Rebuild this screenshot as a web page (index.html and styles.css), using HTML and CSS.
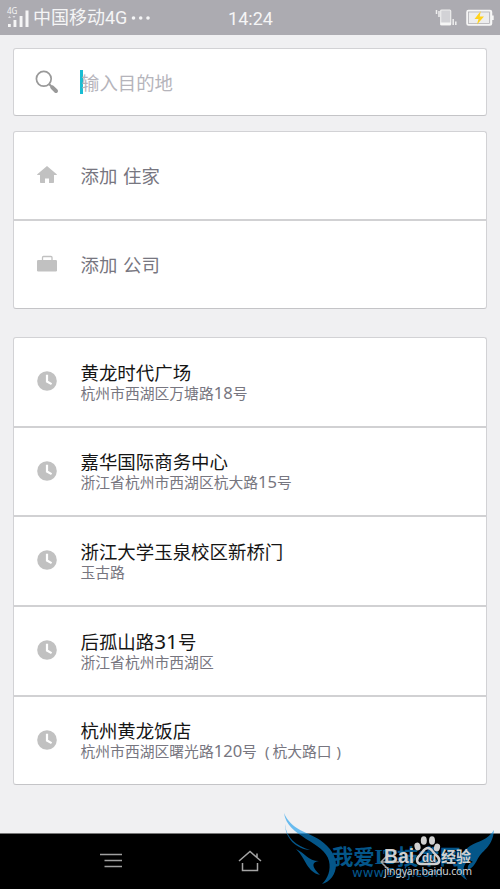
FILE: index.html
```html
<!DOCTYPE html>
<html lang="zh-CN">
<head>
<meta charset="utf-8">
<meta name="viewport" content="width=device-width">
<title>输入目的地</title>
<link rel="stylesheet" href="styles.css">
</head>
<body>
<svg class="defs" width="0" height="0"><defs>
<symbol id="clock" viewBox="0 0 20 20"><circle cx="10" cy="10" r="9.8" fill="#c1c1c1"/><path d="M10 3.800v6.700l4.600 2.600" fill="none" stroke="#fff" stroke-width="2.200"/></symbol>
</defs></svg>
<header class="status">
  <div class="carrier">
    <svg class="signal" width="22" height="22" viewBox="0 0 22 22"><path d="M1 17h2.800v3H1zM6.500 13h2.900v7H6.500zM12.600 9h2.900v11h-2.900zM18.500 3.500h3v16.500h-3z" fill="#f5f5f6"/><path d="M1 11l1.500-2L4 11zM5.500 9h3L7 11z" fill="#dedee2"/><text x="0" y="7.300" class="net">4G</text></svg>
    <span>中国移动4G</span><svg width="20" height="6" viewBox="0 0 20 6" fill="#f5f5f6"><circle cx="2.500" cy="3" r="1.800"/><circle cx="9.700" cy="3" r="1.800"/><circle cx="17" cy="3" r="1.800"/></svg>
  </div>
  <time class="time">14:24</time>
  <div class="indicators">
    <svg width="22" height="18" viewBox="0 0 22 18"><path d="M1.500 1v4M4 2v6M18.200 10v6M20.800 12.500v3.500" stroke="#eee" stroke-width="1.500"/><rect x="5.700" y="1" width="10" height="15" rx="1" fill="#d2d2d6" stroke="#eee" stroke-width="1.200"/><path d="M5.500 13.500h10.500V16H5.500z" fill="#f6f6f6"/></svg>
    <svg width="28" height="18" viewBox="0 0 28 18"><rect x="1" y="1.500" width="24.500" height="14.500" rx="1.500" fill="#eee" stroke="#f7f7f7" stroke-width="1.500"/><rect x="2.500" y="3" width="21" height="11.500" fill="#ededee" stroke="#aaa9ae" stroke-width=".7"/><path d="M26 6.500h1.700v4.500H26z" fill="#f7f7f7"/><path d="M14.800 2L8.500 10h4l-1.500 5.500 7-8h-4.300z" fill="#ffd21c"/></svg>
  </div>
</header>
<main>
  <section class="card search">
    <svg class="icon lens" width="24" height="24" viewBox="0 0 24 24"><circle cx="8.800" cy="8.800" r="7.400" fill="none" stroke="#999" stroke-width="1.700"/><path d="M14 14l3 3" stroke="#999" stroke-width="2"/><path d="M17.300 17.300l3.700 3.700" stroke="#999" stroke-width="4" stroke-linecap="round"/></svg>
    <i class="caret"></i><span class="hint">输入目的地</span>
  </section>
  <section class="card shortcuts">
    <div class="row"><svg class="icon" width="20" height="18" viewBox="0 0 20 18"><path d="M10 0L20 8.500q-.5.700-1.500.500H17v7.200q0 .800-.8.800H12v-4.500H8V17H3.800Q3 17 3 16.200V9H1.500Q.5 9.200 0 8.500z" fill="#c1c1c1"/></svg><span>添加 住家</span></div>
    <div class="row"><svg class="icon" width="20" height="18" viewBox="0 0 20 18"><path d="M5.500 5V2.500q0-1 1-1h7.500q1 0 1 1V5" fill="none" stroke="#c1c1c1" stroke-width="1.300"/><rect y="5" width="20" height="11.500" rx="1.300" fill="#c1c1c1"/></svg><span>添加 公司</span></div>
  </section>
  <section class="card history">
    <div class="row"><svg class="icon" width="20" height="20"><use href="#clock"/></svg><div><h2>黄龙时代广场</h2><p>杭州市西湖区万塘路<span class="num">18</span>号</p></div></div>
    <div class="row"><svg class="icon" width="20" height="20"><use href="#clock"/></svg><div><h2>嘉华国际商务中心</h2><p>浙江省杭州市西湖区杭大路<span class="num">15</span>号</p></div></div>
    <div class="row"><svg class="icon" width="20" height="20"><use href="#clock"/></svg><div><h2>浙江大学玉泉校区新桥门</h2><p>玉古路</p></div></div>
    <div class="row"><svg class="icon" width="20" height="20"><use href="#clock"/></svg><div><h2>后孤山路<span class="num">31</span>号</h2><p>浙江省杭州市西湖区</p></div></div>
    <div class="row"><svg class="icon" width="20" height="20"><use href="#clock"/></svg><div><h2>杭州黄龙饭店</h2><p>杭州市西湖区曙光路<span class="num">120</span>号<span class="paren open">(</span>杭大路口<span class="paren">)</span></p></div></div>
  </section>
</main>
<nav class="navbar">
  <svg width="24" height="24" viewBox="0 0 24 24"><path d="M1 4.500h22M5.500 10.500H23M5.500 16.500H23" stroke="#a0a0a0" stroke-width="1.700"/></svg>
  <svg width="24" height="24" viewBox="0 0 24 24"><path d="M1 11L12 1.500 23 11M19 7V3.500M4.500 13v7.500h15V13" fill="none" stroke="#a5a5a5" stroke-width="1.500"/></svg>
  <svg width="24" height="24" viewBox="0 0 24 24"><path d="M12 4L4 12l8 8M4 12h18" fill="none" stroke="#a5a5a5" stroke-width="1.500"/></svg>
</nav>
<svg class="mark" width="230" height="89" viewBox="0 0 230 89">
  <g class="wings"><path d="M14 13C21 30 38 32 50 40c11 8 16 16 16 25 0 9-6 17-14 19 6-6 9-14 7-23C55 42 17 37 14 13z"/><path d="M15 24c1 13 11 22 25 26C26 49 15 38 15 24zM26 49c9 4 12 12 23 12-7 1-8 5 1 14-13-3-14-16-24-26zM224 30c-6 10-16 11-24 16-13 9-19 25-3 34-6-9-4-17 4-21 10-5 22-12 23-29zM215 50c-7 4-10 6-17 9l5 3c-4 1-6 4-5 8 9-4 8-13 17-20z"/><text x="62" y="64" class="site" textLength="129" lengthAdjust="spacingAndGlyphs">我爱IT技术网</text><text x="82" y="77" class="www" textLength="91" lengthAdjust="spacingAndGlyphs">www.52ij.com</text></g>
  <g class="baidu"><text x="114" y="63" class="bai" textLength="30" lengthAdjust="spacingAndGlyphs">Bai</text><text x="152" y="62" class="du" textLength="14" lengthAdjust="spacingAndGlyphs">du</text><text x="171" y="62" class="exp" textLength="30">经验</text><text x="114" y="75" class="url" textLength="88">jingyan.baidu.com</text>
  <ellipse cx="147.500" cy="46.500" rx="3" ry="4" transform="rotate(-15 147.500 46.500)"/><ellipse cx="153.800" cy="40.500" rx="3" ry="4.300"/><ellipse cx="162" cy="40.500" rx="3" ry="4.300"/><ellipse cx="167" cy="47.500" rx="3" ry="4" transform="rotate(15 167 47.500)"/><path d="M158 48c-4 0-5 4-8 7-5 4-3 9 1 9h14c5 0 6-5 1-9-4-3-4-7-8-7z" fill="none" stroke="#d0d0d0" stroke-width="2.500"/></g>
</svg>
</body>
</html>
```
FILE: styles.css
```css
* { box-sizing: border-box; }
body { margin: 0; width: 500px; height: 889px; overflow: hidden; position: relative; background: #f0f0f2; font-family: "Noto Sans", "Noto Sans CJK SC", sans-serif; color: #777680; display: flex; flex-direction: column; }
svg { display: block; flex: none; }
.defs { position: absolute; }
.status { height: 35px; background: #acabb1; color: #f5f5f6; display: grid; grid-template-columns: 1fr auto 1fr; align-items: center; padding: 0 6px 0 7px; font: 18px/34px Roboto, "Noto Sans CJK SC", sans-serif; }
.carrier { display: flex; align-items: center; gap: 4px; white-space: nowrap; font-size: 18px; }
.signal { overflow: visible; }
.time { padding-top: 2px; }
.net { font: 8px "Noto Sans", sans-serif; fill: #f5f5f6; }
.indicators { display: flex; gap: 9px; justify-content: flex-end; }
main { flex: 1; padding: 13px 13px 0; }
.card { background: #fff; border: 1px solid #d2d2d5; border-bottom-color: #c4c4c7; border-radius: 3px; }
.search { height: 68px; display: flex; align-items: center; padding-left: 21px; }
.lens { margin-right: 21px; }
.caret { width: 3px; height: 24px; background: #19bdd3; margin-right: -2px; }
.hint { font-size: 18.400px; color: #b5b4bb; line-height: 27px; }
.shortcuts { margin-top: 15px; height: 178px; display: grid; grid-template-rows: 87px 89px; }
.row { display: flex; align-items: center; padding: 0 0 1px 23px; }
.row + .row { border-top: 2px solid #d1d1d3; }
.icon + span, .icon + div { margin-left: 23.500px; }
.shortcuts .row { font-size: 18.400px; word-spacing: 1px; }
.history { margin-top: 28px; height: 448px; display: grid; grid-template-rows: 88px 89px 90px 90px 89px; }
.history .row { padding-bottom: 2px; }
.history .row > div { padding-top: 2px; }
h2 { margin: 0; color: #151515; font-size: 18.450px; line-height: 21px; font-weight: 400; }
p { margin: 0; font-size: 14.800px; line-height: 20px; }
.num { font-size: 1.120em; line-height: 1; }
.paren { margin-left: 5px; }
.open { margin: 0 3px 0 8px; }
.navbar { height: 56px; background: #000; border-top: 1px solid #777; display: flex; justify-content: space-between; align-items: center; padding: 0 99px; }
.mark { position: absolute; left: 270px; bottom: 0; }
.baidu { fill: #d0d0d0; font-family: "Liberation Sans", "Noto Sans CJK SC", sans-serif; font-weight: 700; }
.bai { font-size: 20px; }
.du { font-size: 12px; }
.exp { font-size: 15px; }
.url { font: 10.500px "Noto Sans", sans-serif; }
.wings { fill: #0795ed; opacity: .58; }
.site { font: 700 21px "Liberation Serif", "Noto Sans CJK SC", sans-serif; }
.www { font: 13px "DejaVu Sans", sans-serif; }
```
